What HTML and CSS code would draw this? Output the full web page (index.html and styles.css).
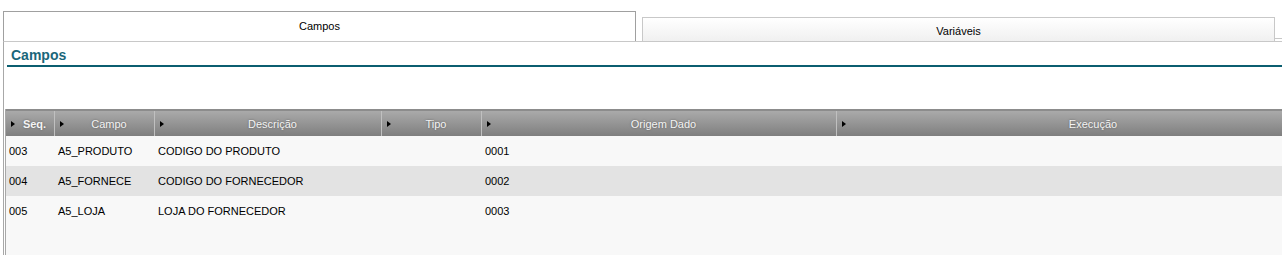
FILE: index.html
```html
<!DOCTYPE html>
<html lang="pt">
<head>
    <meta charset="UTF-8">
    <title>Campos</title>
    <link rel="stylesheet" href="styles.css">
</head>
<body>

<div class="tabs">
    <div class="tab active">Campos</div>
    <div class="tab">Variáveis</div>
    <div class="tab-stub"></div>
</div>

<div class="panel">
    <h2 class="panel-title">Campos</h2>
    <div class="grid">
        <div class="grid-head">
            <div class="head-cell bold"><span class="arrow"></span><span class="label">Seq.</span></div>
            <div class="head-cell"><span class="arrow"></span><span class="label">Campo</span></div>
            <div class="head-cell"><span class="arrow"></span><span class="label">Descrição</span></div>
            <div class="head-cell"><span class="arrow"></span><span class="label">Tipo</span></div>
            <div class="head-cell"><span class="arrow"></span><span class="label">Origem Dado</span></div>
            <div class="head-cell"><span class="arrow"></span><span class="label">Execução</span></div>
        </div>
        <div class="grid-body">
            <div class="row">
                <div class="cell">003</div>
                <div class="cell">A5_PRODUTO</div>
                <div class="cell">CODIGO DO PRODUTO</div>
                <div class="cell"></div>
                <div class="cell">0001</div>
                <div class="cell"></div>
            </div>
            <div class="row alt">
                <div class="cell">004</div>
                <div class="cell">A5_FORNECE</div>
                <div class="cell">CODIGO DO FORNECEDOR</div>
                <div class="cell"></div>
                <div class="cell">0002</div>
                <div class="cell"></div>
            </div>
            <div class="row">
                <div class="cell">005</div>
                <div class="cell">A5_LOJA</div>
                <div class="cell">LOJA DO FORNECEDOR</div>
                <div class="cell"></div>
                <div class="cell">0003</div>
                <div class="cell"></div>
            </div>
        </div>
    </div>
</div>

</body>
</html>
```

FILE: styles.css
```css
body {
    font-family: "Liberation Sans", Arial, sans-serif;
    font-size: 11px;
    color: #000;
    background-color: #fff;
    margin: 0;
    padding: 0;
    overflow: hidden;
}

.tabs {
    display: flex;
    align-items: flex-end;
    padding: 11px 0 0 3px;
    height: 30px;
}

.tab {
    box-sizing: border-box;
    width: 633px;
    height: 24px;
    margin-left: 6px;
    border: 1px solid #c8c8c8;
    border-bottom: none;
    background: linear-gradient(#ffffff, #f0f0f0);
    display: flex;
    align-items: center;
    justify-content: center;
    padding-top: 2px;
}

.tab.active {
    height: 30px;
    margin-left: 0;
    border-color: #a0a0a0;
    background: #fff;
    padding-top: 0;
    padding-bottom: 2px;
}

.tab-stub {
    flex: 1;
    height: 2px;
    border-top: 1px solid #c8c8c8;
}

.panel {
    margin-left: 3px;
    border-left: 1px solid #a8a8a8;
    border-top: 1px solid #c8c8c8;
    height: 214px;
    overflow: hidden;
}

.panel-title {
    margin: 0 0 0 3px;
    padding: 7px 0 3px 4px;
    font-size: 14px;
    font-weight: bold;
    color: #1a667a;
    border-bottom: 2px solid #0b5e70;
    line-height: 13px;
}

.grid {
    margin: 42px 0 0 1px;
    border-left: 1px solid #a8a8a8;
    height: 200px;
    background-color: #f8f8f8;
    overflow: hidden;
}

.grid-head,
.row {
    display: grid;
    grid-template-columns: 48px 100px 227px 100px 355px 504px;
}

.grid-head {
    height: 27px;
    border-top: 2px solid #8c8c8c;
    box-sizing: border-box;
    background: linear-gradient(#aaaaaa, #7f7f7f);
}

.head-cell {
    display: flex;
    align-items: center;
    border-left: 1px solid #c0c0c0;
    color: #f4f4f4;
    text-shadow: 0 0 2px #5a5a5a;
    padding-left: 5px;
}

.head-cell:first-child {
    border-left: none;
}

.head-cell.bold {
    font-weight: bold;
}

.arrow {
    width: 0;
    height: 0;
    border-top: 3px solid transparent;
    border-bottom: 3px solid transparent;
    border-left: 4px solid #000;
    flex-shrink: 0;
}

.label {
    flex: 1;
    text-align: center;
}

.row {
    height: 30px;
    line-height: 30px;
    background-color: #f8f8f8;
}

.row.alt {
    background-color: #e3e3e3;
}

.cell {
    padding-left: 4px;
    white-space: nowrap;
}

.cell:first-child {
    padding-left: 3px;
}
```
